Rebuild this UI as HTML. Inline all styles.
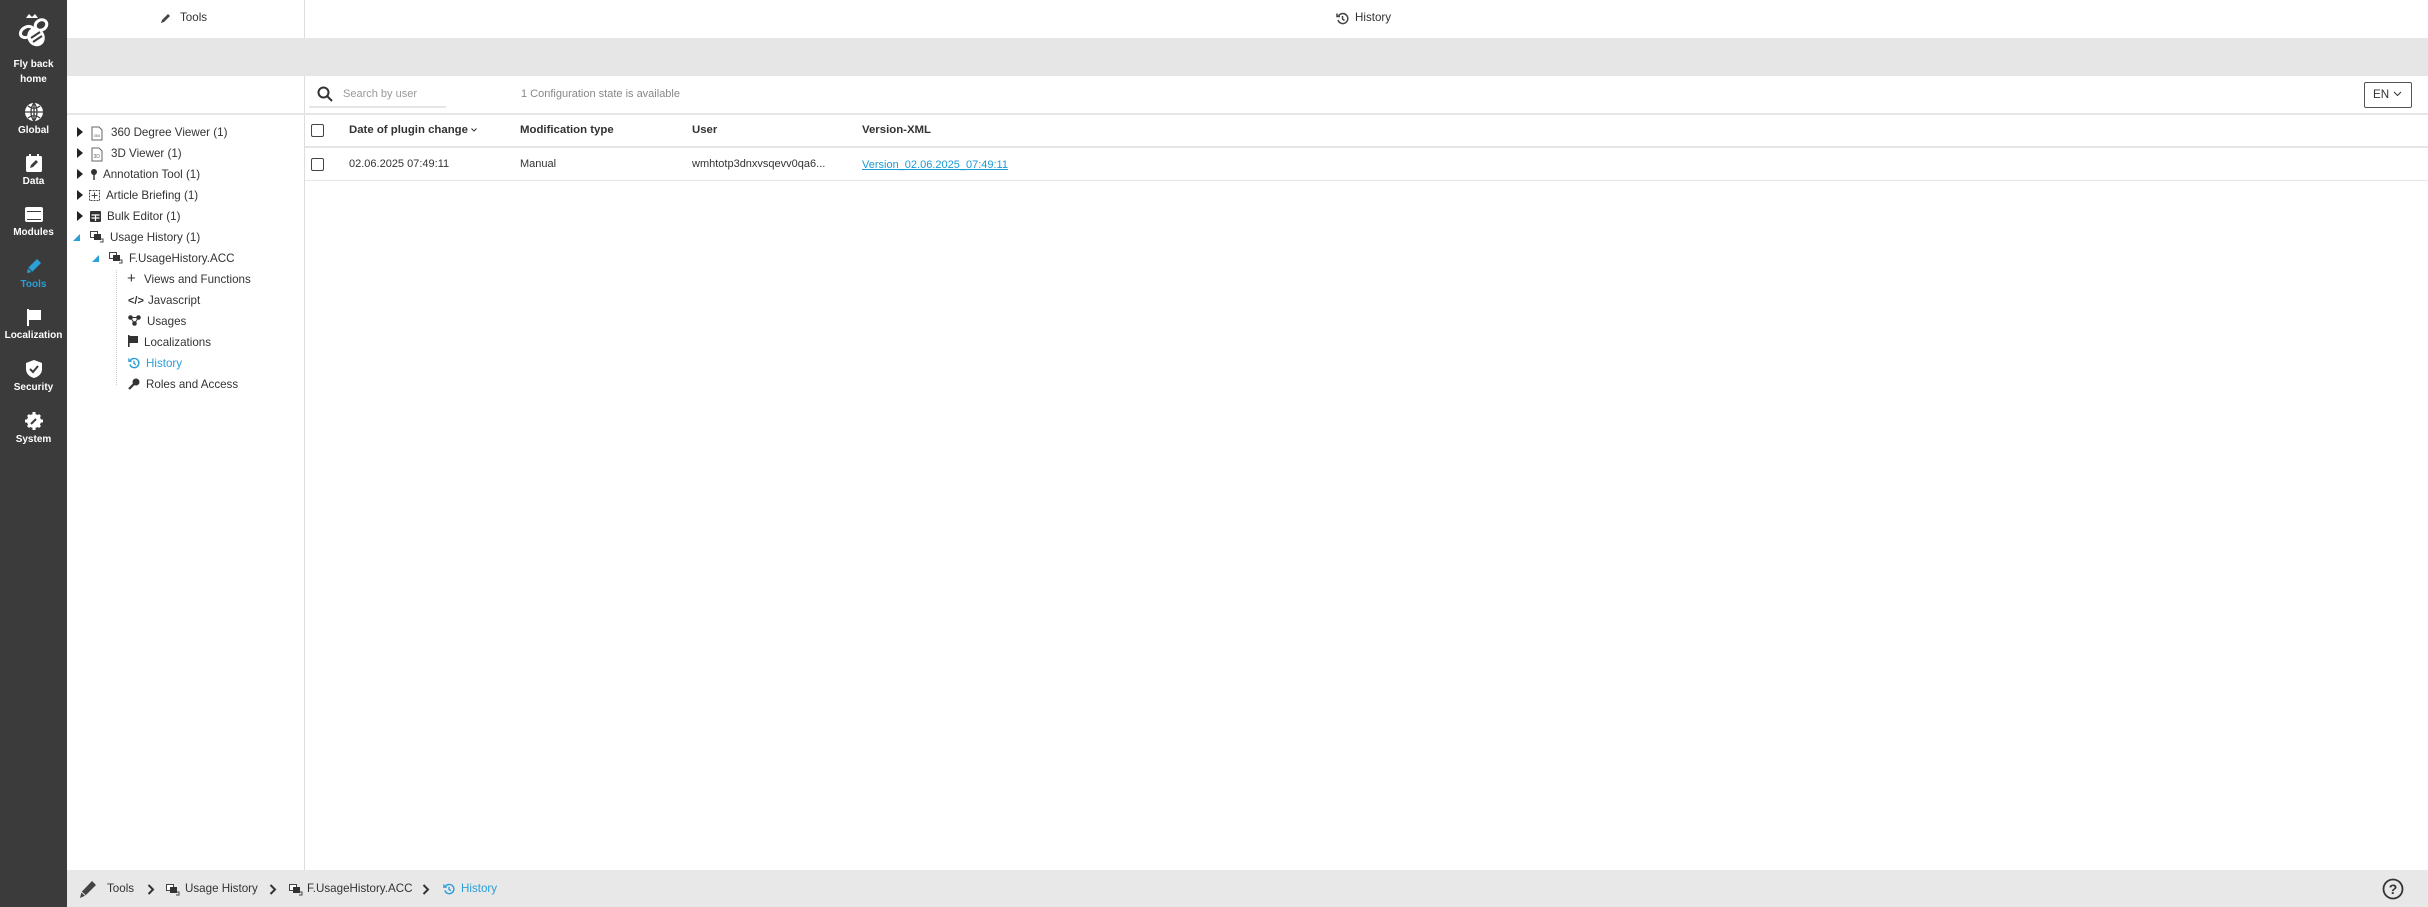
<!DOCTYPE html>
<html><head><meta charset="utf-8">
<style>
*{margin:0;padding:0;box-sizing:border-box}
body{width:2428px;height:907px;overflow:hidden;background:#fff;font-family:"Liberation Sans",sans-serif;font-size:12px;color:#333;position:relative}
.a{position:absolute}
.sb{left:0;top:0;width:67px;height:907px;background:#3b3b3b}
.nav{position:absolute;left:0;width:67px;text-align:center;color:#fff;font-size:10px;font-weight:bold}
.nav svg{display:block;margin:0 auto 3px}
.t{position:absolute;white-space:nowrap;font-size:11.6px;color:#333;line-height:14px}
.tri{position:absolute;width:0;height:0;border-top:5px solid transparent;border-bottom:5px solid transparent;border-left:6px solid #222}
.cb{position:absolute;width:13px;height:13px;border:1.3px solid #444;border-radius:2px;background:#fff}
.th{font-weight:bold;font-size:11.4px}
.bc{position:absolute;top:882px;font-size:11.6px;white-space:nowrap}
</style></head><body>
<div class="a sb"></div>
<svg class="a" style="left:14px;top:10px" width="40" height="40" viewBox="0 0 40 40" fill="none" stroke="#fff" stroke-width="3">
<path d="M12 8 l3 -4 3 3 3 -3 3 4 z" fill="#fff" stroke="none"/>
<ellipse cx="13" cy="22" rx="7" ry="5" transform="rotate(-30 13 22)"/>
<ellipse cx="27" cy="15" rx="6" ry="5" transform="rotate(-30 27 15)"/>
<ellipse cx="22" cy="27" rx="7" ry="8" transform="rotate(-30 22 27)" fill="#fff"/>
<path d="M17 28 l9 -6 M19 32 l9 -6" stroke="#3b3b3b" stroke-width="2"/>
</svg>
<div class="nav" style="top:57px;line-height:15px">Fly back<br>home</div>
<div class="nav" style="top:102px"><svg width="20" height="20" viewBox="0 0 20 20"><circle cx="10" cy="10" r="9" fill="#fff"/><path d="M1 10h18M10 1v18M4 4c4 3 8 3 12 0M4 16c4-3 8-3 12 0M10 1c-4 5-4 13 0 18M10 1c4 5 4 13 0 18" stroke="#3b3b3b" stroke-width="1.3" fill="none"/></svg>Global</div>
<div class="nav" style="top:153px"><svg width="20" height="20" viewBox="0 0 20 20"><rect x="2" y="3" width="16" height="16" rx="1.5" fill="#fff"/><rect x="5" y="1" width="2" height="4" fill="#fff"/><rect x="13" y="1" width="2" height="4" fill="#fff"/><path d="M6 15l1-3 5-5 2 2-5 5z" fill="#3b3b3b"/></svg>Data</div>
<div class="nav" style="top:204px"><svg width="20" height="20" viewBox="0 0 20 20"><rect x="1" y="3" width="18" height="15" rx="2" fill="#fff"/><rect x="3" y="7" width="14" height="9" fill="#3b3b3b"/><rect x="3" y="8" width="14" height="7" fill="#fff"/></svg>Modules</div>
<div class="nav" style="top:256px;color:#2a9fd8"><svg width="20" height="20" viewBox="0 0 20 20"><path d="M3 17l1-5 9-9 4 4-9 9z" fill="#2a9fd8"/><path d="M4 12l4 4" stroke="#3b3b3b" stroke-width="1"/></svg>Tools</div>
<div class="nav" style="top:307px"><svg width="20" height="20" viewBox="0 0 20 20"><rect x="3" y="2" width="2" height="17" fill="#fff"/><path d="M5 3h12v10H5z" fill="#fff"/></svg>Localization</div>
<div class="nav" style="top:359px"><svg width="20" height="20" viewBox="0 0 20 20"><path d="M10 1l8 3v6c0 5-4 8-8 9-4-1-8-4-8-9V4z" fill="#fff"/><path d="M6 10l3 3 5-6" stroke="#3b3b3b" stroke-width="2" fill="none"/></svg>Security</div>
<div class="nav" style="top:411px"><svg width="20" height="20" viewBox="0 0 20 20"><circle cx="10" cy="10" r="7" fill="#fff"/><path d="M10 1v4M10 15v4M1 10h4M15 10h4M4 4l3 3M13 13l3 3M16 4l-3 3M4 16l3-3" stroke="#fff" stroke-width="3"/><path d="M7 13l5-5" stroke="#3b3b3b" stroke-width="2"/></svg>System</div>

<div class="a" style="left:304px;top:0;width:1px;height:38px;background:#ddd"></div>
<svg class="a" style="left:160px;top:12px" width="12" height="12" viewBox="0 0 12 12"><path d="M1 11l1-3 6-6 2 2-6 6z" fill="#444"/></svg>
<div class="t" style="left:180px;top:11px">Tools</div>
<svg class="a" style="left:1336px;top:12px" width="13" height="13" viewBox="0 0 13 13" fill="none" stroke="#444" stroke-width="1.5"><path d="M2.5 4A5 5 0 1 1 2 8"/><path d="M1 1.5v3h3"/><path d="M6.5 4v3l2 1.5"/></svg>
<div class="t" style="left:1355px;top:11px">History</div>
<div class="a" style="left:67px;top:38px;width:2361px;height:38px;background:#e6e6e6"></div>

<div class="a" style="left:304px;top:76px;width:1px;height:794px;background:#ddd"></div>
<div class="a" style="left:67px;top:113px;width:2361px;height:2px;background:#e6e6e6"></div>
<div class="tri" style="left:77px;top:127px"></div>
<svg class="a" style="left:91px;top:126px" width="12" height="15" viewBox="0 0 12 15"><path d="M1 1h7l3 3v10H1z" fill="#fff" stroke="#666"/><text x="2.5" y="11" font-size="4" fill="#666">360</text></svg>
<div class="t" style="left:111px;top:126px">360 Degree Viewer (1)</div>
<div class="tri" style="left:77px;top:148px"></div>
<svg class="a" style="left:91px;top:147px" width="12" height="15" viewBox="0 0 12 15"><path d="M1 1h7l3 3v10H1z" fill="#fff" stroke="#666"/><text x="2.5" y="11" font-size="5" fill="#666">3D</text></svg>
<div class="t" style="left:111px;top:147px">3D Viewer (1)</div>
<div class="tri" style="left:77px;top:169px"></div>
<svg class="a" style="left:90px;top:168px" width="8" height="13"><circle cx="4" cy="4" r="3" fill="#333"/><rect x="3.3" y="6" width="1.4" height="6" fill="#333"/></svg>
<div class="t" style="left:103px;top:168px">Annotation Tool (1)</div>
<div class="tri" style="left:77px;top:190px"></div>
<svg class="a" style="left:89px;top:190px" width="11" height="11" viewBox="0 0 11 11" fill="none" stroke="#444"><rect x=".5" y=".5" width="10" height="10" stroke-dasharray="2 1"/><path d="M5.5 2.5v6M2.5 5.5h6"/></svg>
<div class="t" style="left:106px;top:189px">Article Briefing (1)</div>
<div class="tri" style="left:77px;top:211px"></div>
<svg class="a" style="left:90px;top:211px" width="11" height="11" viewBox="0 0 11 11"><rect x="0" y="0" width="11" height="11" rx="1" fill="#333"/><path d="M1.5 4h8M5.5 4v6M1.5 7h8" stroke="#fff" stroke-width="1.2"/></svg>
<div class="t" style="left:107px;top:210px">Bulk Editor (1)</div>
<svg class="a" style="left:73px;top:233px" width="8" height="8"><path d="M0 8h7V1z" fill="#2a9fd8"/></svg>
<svg class="a" style="left:90px;top:231px" width="14" height="12" viewBox="0 0 14 12"><rect x="0.5" y="0.5" width="7" height="6" fill="#fff" stroke="#444"/><rect x="4" y="3" width="7" height="6" fill="#333"/><path d="M11 8h2v3h-3" stroke="#444" fill="none"/></svg>
<div class="t" style="left:110px;top:231px">Usage History (1)</div>
<svg class="a" style="left:92px;top:254px" width="8" height="8"><path d="M0 8h7V1z" fill="#2a9fd8"/></svg>
<svg class="a" style="left:109px;top:252px" width="14" height="12" viewBox="0 0 14 12"><rect x="0.5" y="0.5" width="7" height="6" fill="#fff" stroke="#444"/><rect x="4" y="3" width="7" height="6" fill="#333"/><path d="M11 8h2v3h-3" stroke="#444" fill="none"/></svg>
<div class="t" style="left:129px;top:252px">F.UsageHistory.ACC</div>
<div class="a" style="left:116px;top:270px;width:0;height:115px;border-left:1px dotted #ccc"></div>
<div class="t" style="left:127px;top:272px;font-size:15px">+</div>
<div class="t" style="left:144px;top:273px">Views and Functions</div>
<div class="t" style="left:128px;top:294px;font-weight:bold;font-size:11px">&lt;/&gt;</div>
<div class="t" style="left:148px;top:294px">Javascript</div>
<svg class="a" style="left:128px;top:315px" width="13" height="11"><circle cx="2.5" cy="2.5" r="2.3" fill="#333"/><circle cx="10.5" cy="2.5" r="2.3" fill="#333"/><circle cx="6.5" cy="8.5" r="2.3" fill="#333"/><path d="M2.5 2.5h8L6.5 8.5z" stroke="#333" fill="none"/></svg>
<div class="t" style="left:147px;top:315px">Usages</div>
<svg class="a" style="left:128px;top:335px" width="11" height="12"><rect x="0" y="0" width="1.6" height="12" fill="#333"/><path d="M1 1h9v7H1z" fill="#333"/></svg>
<div class="t" style="left:144px;top:336px">Localizations</div>
<svg class="a" style="left:128px;top:357px" width="12" height="12" viewBox="0 0 13 13" fill="none" stroke="#2a9fd8" stroke-width="1.5"><path d="M2.5 4A5 5 0 1 1 2 8"/><path d="M1 1.5v3h3"/><path d="M6.5 4v3l2 1.5"/></svg>
<div class="t" style="left:146px;top:357px;color:#2a9fd8">History</div>
<svg class="a" style="left:128px;top:378px" width="12" height="12" viewBox="0 0 12 12"><circle cx="8" cy="4" r="3.5" fill="#333"/><path d="M6 6L1 11" stroke="#333" stroke-width="2.2"/></svg>
<div class="t" style="left:146px;top:378px">Roles and Access</div>

<svg class="a" style="left:317px;top:86px" width="16" height="16" viewBox="0 0 16 16" fill="none" stroke="#333" stroke-width="2"><circle cx="6.5" cy="6.5" r="5"/><path d="M10 10l5 5"/></svg>
<div class="t" style="left:343px;top:87px;color:#999;font-size:11px">Search by user</div>
<div class="a" style="left:309px;top:106px;width:137px;height:2px;background:#e6e6e6"></div>
<div class="t" style="left:521px;top:87px;color:#888;font-size:11px">1 Configuration state is available</div>
<div class="a" style="left:2364px;top:82px;width:48px;height:26px;border:1px solid #555;border-radius:2px"></div>
<div class="t" style="left:2373px;top:88px">EN</div>
<svg class="a" style="left:2393px;top:91px" width="9" height="6"><path d="M1 1l3.5 3.5L8 1" stroke="#333" fill="none"/></svg>

<div class="cb" style="left:311px;top:124px"></div>
<div class="t th" style="left:349px;top:123px">Date of plugin change</div>
<svg class="a" style="left:471px;top:128px" width="6" height="5"><path d="M.5 .5l2.5 2.5L5.5 .5" stroke="#333" fill="none"/></svg>
<div class="t th" style="left:520px;top:123px">Modification type</div>
<div class="t th" style="left:692px;top:123px">User</div>
<div class="t th" style="left:862px;top:123px">Version-XML</div>
<div class="a" style="left:305px;top:146px;width:2123px;height:2px;background:#e6e6e6"></div>
<div class="cb" style="left:311px;top:158px"></div>
<div class="t" style="left:349px;top:157px;font-size:11px">02.06.2025 07:49:11</div>
<div class="t" style="left:520px;top:157px;font-size:11px">Manual</div>
<div class="t" style="left:692px;top:157px;font-size:11px">wmhtotp3dnxvsqevv0qa6...</div>
<div class="t" style="left:862px;top:158px;font-size:11px;color:#1a9ad6;text-decoration:underline">Version_02.06.2025_07:49:11</div>
<div class="a" style="left:305px;top:180px;width:2123px;height:1px;background:#e6e6e6"></div>

<div class="a" style="left:67px;top:870px;width:2361px;height:37px;background:#e8e8e8"></div>
<svg class="a" style="left:78px;top:878px" width="20" height="22" viewBox="0 0 20 22"><path d="M2 20l1.5-6L14 3l4 4L7.5 17.5z" fill="#444"/><path d="M3.5 14l4 3.5" stroke="#e8e8e8" stroke-width="1"/></svg>
<div class="bc" style="left:107px">Tools</div>
<svg class="a" style="left:147px;top:884px" width="8" height="11"><path d="M1.5 1l4.5 4.5L1.5 10" stroke="#333" stroke-width="2" fill="none"/></svg>
<svg class="a" style="left:166px;top:884px" width="14" height="12" viewBox="0 0 14 12"><rect x="0.5" y="0.5" width="7" height="6" fill="#fff" stroke="#444"/><rect x="4" y="3" width="7" height="6" fill="#333"/><path d="M11 8h2v3h-3" stroke="#444" fill="none"/></svg>
<div class="bc" style="left:185px">Usage History</div>
<svg class="a" style="left:269px;top:884px" width="8" height="11"><path d="M1.5 1l4.5 4.5L1.5 10" stroke="#333" stroke-width="2" fill="none"/></svg>
<svg class="a" style="left:289px;top:884px" width="14" height="12" viewBox="0 0 14 12"><rect x="0.5" y="0.5" width="7" height="6" fill="#fff" stroke="#444"/><rect x="4" y="3" width="7" height="6" fill="#333"/><path d="M11 8h2v3h-3" stroke="#444" fill="none"/></svg>
<div class="bc" style="left:307px">F.UsageHistory.ACC</div>
<svg class="a" style="left:422px;top:884px" width="8" height="11"><path d="M1.5 1l4.5 4.5L1.5 10" stroke="#333" stroke-width="2" fill="none"/></svg>
<svg class="a" style="left:443px;top:883px" width="12" height="12" viewBox="0 0 13 13" fill="none" stroke="#2a9fd8" stroke-width="1.5"><path d="M2.5 4A5 5 0 1 1 2 8"/><path d="M1 1.5v3h3"/><path d="M6.5 4v3l2 1.5"/></svg>
<div class="bc" style="left:461px;color:#2a9fd8">History</div>
<svg class="a" style="left:2382px;top:878px" width="22" height="22" viewBox="0 0 22 22"><circle cx="11" cy="11" r="9.5" fill="none" stroke="#333" stroke-width="1.8"/><text x="11" y="16" font-size="14" font-weight="bold" text-anchor="middle" fill="#333" font-family="Liberation Sans">?</text></svg>
</body></html>
